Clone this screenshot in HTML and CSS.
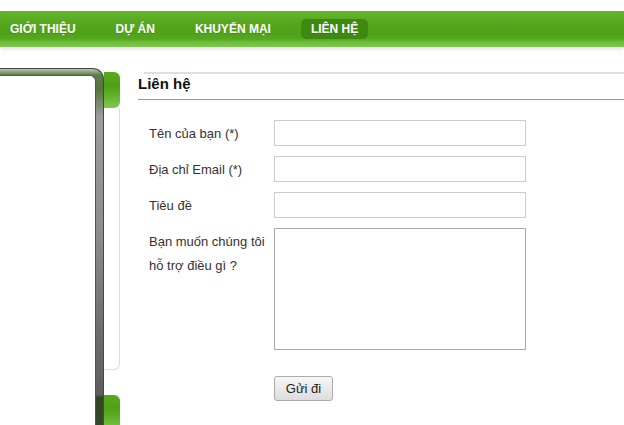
FILE: index.html
```html
<!DOCTYPE html>
<html lang="vi">
<head>
    <meta charset="UTF-8">
    <meta name="viewport" content="width=device-width, initial-scale=1.0">
    <title>Liên hệ</title>
    <link rel="stylesheet" href="styles.css">
</head>
<body>

<div class="topbar">
    <ul class="menu">
        <li><a href="#">GIỚI THIỆU</a></li>
        <li><a href="#">DỰ ÁN</a></li>
        <li><a href="#">KHUYẾN MẠI</a></li>
        <li class="active"><a href="#">LIÊN HỆ</a></li>
    </ul>
</div>

<div class="page">
    <div class="sidebar">
        <div class="frame">
            <div class="frame-inner"></div>
        </div>
        <div class="side-tabs">
            <div class="tab"></div>
            <div class="tab-body"></div>
            <div class="tab tab-last"></div>
        </div>
    </div>

    <div class="content">
        <div class="top-line"></div>
        <h2>Liên hệ</h2>
        <form id="contactForm" class="contact-form">
            <div class="row">
                <label for="name">Tên của bạn (*)</label>
                <input type="text" id="name" name="name">
            </div>
            <div class="row">
                <label for="email">Địa chỉ Email (*)</label>
                <input type="text" id="email" name="email">
            </div>
            <div class="row">
                <label for="subject">Tiêu đề</label>
                <input type="text" id="subject" name="subject">
            </div>
            <div class="row">
                <label for="message">Bạn muốn chúng tôi hỗ trợ điều gì ?</label>
                <textarea id="message" name="message"></textarea>
            </div>
            <div class="row row-submit">
                <button type="submit" class="button">Gửi đi</button>
            </div>
        </form>
    </div>
</div>

</body>
</html>
```

FILE: styles.css
```css
html {
    overflow: hidden;
}
body {
    font-family: "Liberation Sans", Arial, sans-serif;
    margin: 0;
    padding: 0;
    background-color: #fff;
    color: #333;
}
.topbar {
    margin-top: 11px;
    height: 36px;
    background: linear-gradient(to bottom, #64b62c 0, #56a71f 12px, #4fa118 22px, #55a81f 28px, #6dbd3a 31px, #80c950 36px);
    box-shadow: 0 2px 4px rgba(0, 0, 0, 0.12);
}
.menu {
    list-style: none;
    margin: 0;
    padding: 0;
    display: flex;
    align-items: center;
    gap: 20px;
    height: 36px;
}
.menu a {
    display: block;
    padding: 0 10px;
    height: 20px;
    line-height: 20px;
    border-radius: 5px;
    color: #fff;
    font-size: 12px;
    font-weight: bold;
    text-decoration: none;
    text-shadow: 0 1px 0 rgba(0, 0, 0, 0.15);
}
.menu .active a {
    background-color: #3e8a10;
}
.page {
    display: flex;
    align-items: flex-start;
}
.sidebar {
    display: flex;
    align-items: flex-start;
    margin-top: 21px;
}
.frame {
    box-sizing: border-box;
    width: 104px;
    height: 357px;
    padding: 6px 7px 0 0;
    border: 1px solid #474747;
    border-left: none;
    border-bottom: none;
    border-top-right-radius: 11px;
    background: linear-gradient(to bottom, #b9c4b0 0, #5d7d47 6px, #55743f 20px, #9c9c9c 48px, #8d8d8d 160px, #6b6b6b 270px, #5e5e5e 326px, #2f4526 328px, #34492a 357px);
}
.frame-inner {
    height: 100%;
    background-color: #fff;
    border: 1px solid #555;
    border-left: none;
    border-bottom: none;
    border-top-right-radius: 6px;
}
.side-tabs {
    width: 16px;
}
.tab {
    margin-top: 4px;
    height: 36px;
    border-radius: 0 6px 6px 0;
    background: linear-gradient(to bottom, #58aa1c 0, #4fa016 14px, #62b22a 24px, #82c955 36px);
}
.tab-last {
    height: 30px;
    border-bottom-right-radius: 0;
}
.tab-body {
    box-sizing: border-box;
    height: 262px;
    margin-bottom: 25px;
    border-right: 1px solid #dedede;
    border-bottom: 1px solid #dedede;
    border-bottom-right-radius: 6px;
}
.content {
    flex: 1;
    margin-top: 25px;
    padding-left: 18px;
}
.top-line {
    height: 2px;
    margin-left: 6px;
    background-color: #dfdfdf;
}
h2 {
    margin: 0;
    padding: 2px 0 7px;
    font-size: 15px;
    line-height: 16px;
    color: #111;
    border-bottom: 1px solid #999;
}
.contact-form {
    padding: 20px 0 0 11px;
}
.row {
    display: flex;
    align-items: flex-start;
    margin-bottom: 10px;
}
label {
    width: 125px;
    padding-top: 2px;
    font-size: 13px;
    line-height: 24px;
    color: #333;
}
input, textarea {
    box-sizing: border-box;
    width: 252px;
    margin: 0;
    font-family: inherit;
    font-size: 13px;
}
input {
    height: 26px;
    padding: 3px 5px;
    border: 1px solid #cccccc;
}
textarea {
    height: 122px;
    padding: 3px 5px;
    border: 1px solid #a9a9a9;
    resize: none;
}
.row-submit {
    margin-top: 26px;
    margin-bottom: 0;
    padding-left: 125px;
}
.button {
    box-sizing: border-box;
    width: 59px;
    height: 25px;
    padding: 0;
    font-family: inherit;
    font-size: 13px;
    color: #222;
    background: linear-gradient(to bottom, #f7f7f7, #dddddd);
    border: 1px solid #adadad;
    border-radius: 3px;
    cursor: pointer;
}
.button:hover {
    background: linear-gradient(to bottom, #eef6fc, #d6e8f7);
}
```
